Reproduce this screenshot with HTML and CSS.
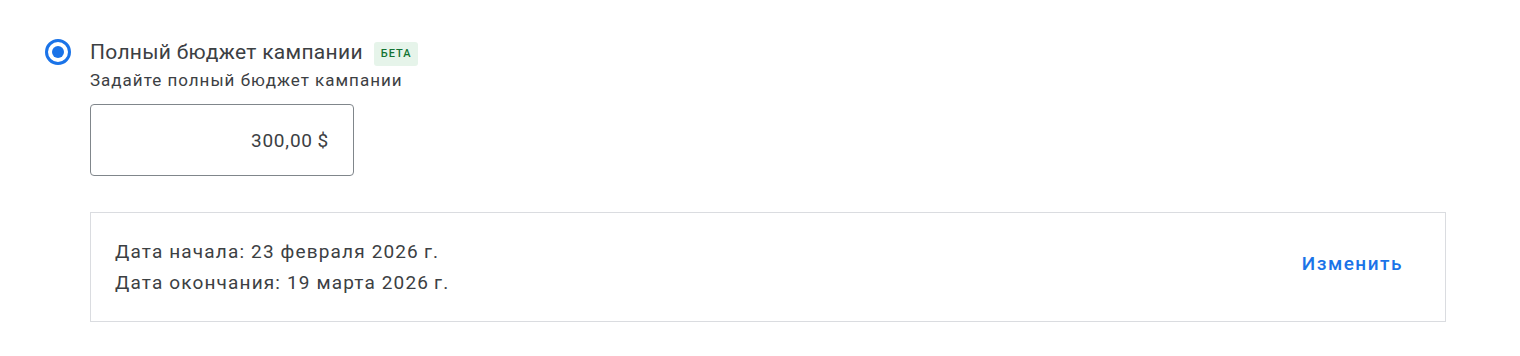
FILE: index.html
```html
<!DOCTYPE html>
<html lang="ru">
<head>
<meta charset="utf-8">
<link rel="stylesheet" href="styles.css">
</head>
<body>
<div class="page">
  <div class="option">
    <div class="radio"><span class="dot"></span></div>
    <div class="content">
      <div class="title-row">
        <span class="title">Полный бюджет кампании</span>
        <span class="badge">БЕТА</span>
      </div>
      <div class="subtitle">Задайте полный бюджет кампании</div>
      <div class="input">300,00&#8201;$</div>
      <div class="dates">
        <div class="date-lines">
          <div>Дата начала: 23 февраля 2026&#8201;г.</div>
          <div>Дата окончания: 19 марта 2026&#8201;г.</div>
        </div>
        <a class="change">Изменить</a>
      </div>
    </div>
  </div>
</div>
</body>
</html>
```
FILE: styles.css
```css
* { box-sizing: border-box; }
html, body { margin: 0; background: #fff; }
body { font-family: Roboto, "Noto Sans", Arial, sans-serif; color: #3c4043; }
.page { padding: 40px 74px 0 45px; }
.option { display: flex; gap: 19px; }
.radio {
  width: 26px; height: 26px; border: 3px solid #1a73e8; border-radius: 50%;
  display: flex; align-items: center; justify-content: center; margin-top: -1px; flex: none;
}
.dot { width: 12px; height: 12px; border-radius: 50%; background: #1a73e8; }
.content { flex: 1; }
.title-row { display: flex; align-items: center; gap: 11px; height: 24px; }
.title { font-size: 21px; line-height: 24px; letter-spacing: 0.3px; color: #3c4043; }
.badge {
  background: #e6f4ea; color: #137333; font-size: 11px; font-weight: 500;
  letter-spacing: 1px; padding: 0 6px 0 7px; border-radius: 3px; line-height: 24px; height: 24px;
  margin-top: 4px;
}
.subtitle { font-size: 17px; line-height: 20px; letter-spacing: 1px; margin-top: 6px; }
.input {
  margin-top: 14px; width: 264px; height: 72px; border: 1px solid #80868b; border-radius: 4px;
  display: flex; align-items: center; justify-content: flex-end; padding-right: 24px;
  font-size: 19px; letter-spacing: 0.8px; color: #3c4043;
}
.dates {
  margin-top: 36px; height: 110px; border: 1px solid #dadce0;
  display: flex; align-items: center; justify-content: space-between; padding: 0 42px 0 24px;
}
.date-lines { font-size: 19px; line-height: 31px; letter-spacing: 1.15px; }
.change { color: #1a73e8; font-size: 19px; font-weight: 500; letter-spacing: 1.5px; margin-bottom: 7px; }
```
